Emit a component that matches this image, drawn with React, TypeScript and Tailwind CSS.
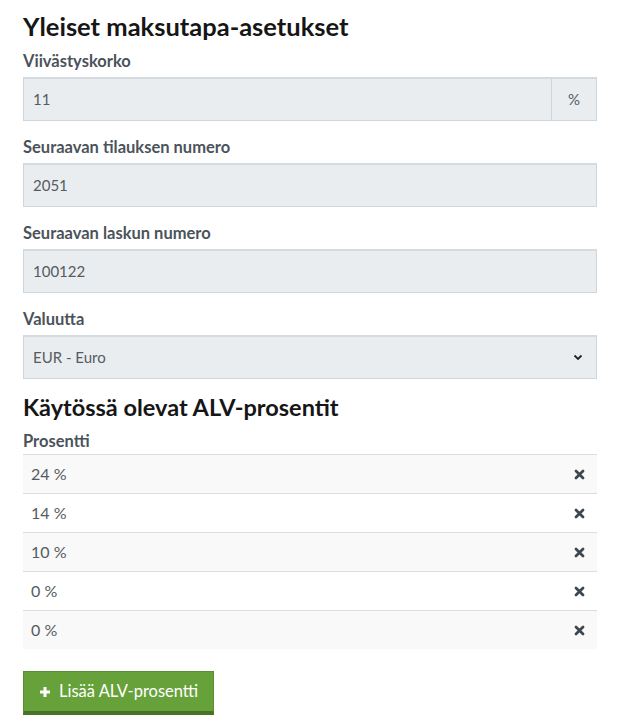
import React from "react";

const rates = ["24 %", "14 %", "10 %", "0 %", "0 %"];

function Label({ children }: { children: React.ReactNode }) {
  return <label className="block text-[16.5px] font-bold text-[#4b535a] leading-[20px] mb-[6px]">{children}</label>;
}

function Field({ value, addon }: { value: string; addon?: string }) {
  return (
    <div className="flex h-[44px] border border-[#cfd6db] border-t-2 border-t-[#d5dadf] bg-[#eaedf0]">
      <div className="flex-1 flex items-center px-[9px] text-[15px] text-[#555b61]">{value}</div>
      {addon && (
        <div className="w-[45px] flex items-center justify-center border-l border-[#cfd6db] text-[15px] text-[#555b61]">
          {addon}
        </div>
      )}
    </div>
  );
}

export default function App() {
  return (
    <div className="min-h-[728px] bg-white pl-[23px] pr-[20px] pt-[10px] text-[#333]" style={{ fontFamily: "Lato, 'Open Sans', sans-serif" }}>
      <h1 className="text-[25.5px] font-bold text-[#161616] leading-[32px] mb-[9px]">Yleiset maksutapa-asetukset</h1>

      <Label>Viivästyskorko</Label>
      <Field value="11" addon="%" />

      <div className="mt-[16px]">
        <Label>Seuraavan tilauksen numero</Label>
        <Field value="2051" />
      </div>

      <div className="mt-[16px]">
        <Label>Seuraavan laskun numero</Label>
        <Field value="100122" />
      </div>

      <div className="mt-[16px]">
        <Label>Valuutta</Label>
        <div className="flex h-[44px] items-center justify-between border border-[#cfd6db] border-t-2 border-t-[#d5dadf] bg-[#eaedf0] px-[9px] text-[15px] text-[#555b61]">
          <span>EUR - Euro</span>
          <svg width="10" height="7" viewBox="0 0 10 7" className="mr-[4px]">
            <path d="M1.5 1.5 L5 5 L8.5 1.5" fill="none" stroke="#222" strokeWidth="1.8" />
          </svg>
        </div>
      </div>

      <h2 className="mt-[13px] text-[23.5px] font-bold text-[#161616] leading-[30px] mb-[9px]">Käytössä olevat ALV-prosentit</h2>
      <div className="text-[16.5px] font-bold text-[#4b535a] leading-[20px] mb-[3px]">Prosentti</div>
      <div>
        {rates.map((r, i) => (
          <div
            key={i}
            className={`flex h-[39px] items-center justify-between border-t border-[#dddddd] pl-[8px] pr-[12px] text-[16px] text-[#555b61] ${i % 2 === 0 ? "bg-[#f9f9f9]" : "bg-white"}`}
          >
            <span>{r}</span>
            <svg width="11" height="11" viewBox="0 0 11 11">
              <path d="M2 2 L9 9 M9 2 L2 9" stroke="#3d4750" strokeWidth="2.8" strokeLinecap="round" />
            </svg>
          </div>
        ))}
      </div>

      <button className="mt-[22px] flex h-[44px] items-center gap-[8px] bg-[#67a13a] border border-[#5a8e31] border-b-[4px] border-b-[#4a7128] px-[15px] text-[16.5px] text-white">
        <svg width="12" height="12" viewBox="0 0 12 12">
          <path d="M6 1 V11 M1 6 H11" stroke="white" strokeWidth="3" />
        </svg>
        Lisää ALV-prosentti
      </button>
    </div>
  );
}
